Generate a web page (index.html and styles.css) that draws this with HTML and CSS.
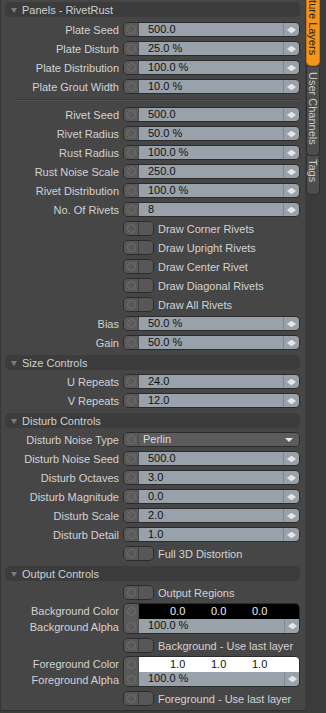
FILE: index.html
```html
<!DOCTYPE html>
<html lang="en">
<head>
  <meta charset="UTF-8">
  <title>Panels - RivetRust</title>
  <link rel="stylesheet" href="styles.css">
</head>
<body>
  <div class="app">
    <div class="panel">
      <div class="head"><span class="tri"></span>Panels - RivetRust</div>
      <div class="row"><span class="lbl">Plate Seed</span><div class="field"><span class="knob"></span><span class="value">500.0</span><span class="spin"></span></div></div>
      <div class="row"><span class="lbl">Plate Disturb</span><div class="field"><span class="knob"></span><span class="value">25.0 %</span><span class="spin"></span></div></div>
      <div class="row"><span class="lbl">Plate Distribution</span><div class="field"><span class="knob"></span><span class="value">100.0 %</span><span class="spin"></span></div></div>
      <div class="row"><span class="lbl">Plate Grout Width</span><div class="field"><span class="knob"></span><span class="value">10.0 %</span><span class="spin"></span></div></div>
      <div class="sep"></div>
      <div class="row"><span class="lbl">Rivet Seed</span><div class="field"><span class="knob"></span><span class="value">500.0</span><span class="spin"></span></div></div>
      <div class="row"><span class="lbl">Rivet Radius</span><div class="field"><span class="knob"></span><span class="value">50.0 %</span><span class="spin"></span></div></div>
      <div class="row"><span class="lbl">Rust Radius</span><div class="field"><span class="knob"></span><span class="value">100.0 %</span><span class="spin"></span></div></div>
      <div class="row"><span class="lbl">Rust Noise Scale</span><div class="field"><span class="knob"></span><span class="value">250.0</span><span class="spin"></span></div></div>
      <div class="row"><span class="lbl">Rivet Distribution</span><div class="field"><span class="knob"></span><span class="value">100.0 %</span><span class="spin"></span></div></div>
      <div class="row"><span class="lbl">No. Of Rivets</span><div class="field"><span class="knob"></span><span class="value">8</span><span class="spin"></span></div></div>
      <div class="row"><span class="lbl"></span><div class="toggle"><span class="knob"></span><span class="off"></span></div><span class="opt">Draw Corner Rivets</span></div>
      <div class="row"><span class="lbl"></span><div class="toggle"><span class="knob"></span><span class="off"></span></div><span class="opt">Draw Upright Rivets</span></div>
      <div class="row"><span class="lbl"></span><div class="toggle"><span class="knob"></span><span class="off"></span></div><span class="opt">Draw Center Rivet</span></div>
      <div class="row"><span class="lbl"></span><div class="toggle"><span class="knob"></span><span class="off"></span></div><span class="opt">Draw Diagonal Rivets</span></div>
      <div class="row"><span class="lbl"></span><div class="toggle"><span class="knob"></span><span class="off"></span></div><span class="opt">Draw All Rivets</span></div>
      <div class="row"><span class="lbl">Bias</span><div class="field"><span class="knob"></span><span class="value">50.0 %</span><span class="spin"></span></div></div>
      <div class="row"><span class="lbl">Gain</span><div class="field"><span class="knob"></span><span class="value">50.0 %</span><span class="spin"></span></div></div>

      <div class="head"><span class="tri"></span>Size Controls</div>
      <div class="row"><span class="lbl">U Repeats</span><div class="field"><span class="knob"></span><span class="value">24.0</span><span class="spin"></span></div></div>
      <div class="row"><span class="lbl">V Repeats</span><div class="field"><span class="knob"></span><span class="value">12.0</span><span class="spin"></span></div></div>

      <div class="head"><span class="tri"></span>Disturb Controls</div>
      <div class="row"><span class="lbl">Disturb Noise Type</span><div class="field select"><span class="knob"></span><span class="value">Perlin</span><span class="drop"></span></div></div>
      <div class="row"><span class="lbl">Disturb Noise Seed</span><div class="field"><span class="knob"></span><span class="value">500.0</span><span class="spin"></span></div></div>
      <div class="row"><span class="lbl">Disturb Octaves</span><div class="field"><span class="knob"></span><span class="value">3.0</span><span class="spin"></span></div></div>
      <div class="row"><span class="lbl">Disturb Magnitude</span><div class="field"><span class="knob"></span><span class="value">0.0</span><span class="spin"></span></div></div>
      <div class="row"><span class="lbl">Disturb Scale</span><div class="field"><span class="knob"></span><span class="value">2.0</span><span class="spin"></span></div></div>
      <div class="row"><span class="lbl">Disturb Detail</span><div class="field"><span class="knob"></span><span class="value">1.0</span><span class="spin"></span></div></div>
      <div class="row"><span class="lbl"></span><div class="toggle"><span class="knob"></span><span class="off"></span></div><span class="opt">Full 3D Distortion</span></div>

      <div class="head"><span class="tri"></span>Output Controls</div>
      <div class="row"><span class="lbl"></span><div class="toggle"><span class="knob"></span><span class="off"></span></div><span class="opt">Output Regions</span></div>
      <div class="pair">
        <div class="pair-labels"><span>Background Color</span><span>Background Alpha</span></div>
        <div class="cbox">
          <span class="knob k1"></span>
          <span class="swatch black"><span>0.0</span><span>0.0</span><span>0.0</span></span>
          <span class="knob k2"></span>
          <span class="value">100.0 %</span>
          <span class="spin"></span>
        </div>
      </div>
      <div class="row"><span class="lbl"></span><div class="toggle"><span class="knob"></span><span class="off"></span></div><span class="opt">Background - Use last layer</span></div>
      <div class="pair">
        <div class="pair-labels"><span>Foreground Color</span><span>Foreground Alpha</span></div>
        <div class="cbox">
          <span class="knob k1"></span>
          <span class="swatch white"><span>1.0</span><span>1.0</span><span>1.0</span></span>
          <span class="knob k2"></span>
          <span class="value">100.0 %</span>
          <span class="spin"></span>
        </div>
      </div>
      <div class="row"><span class="lbl"></span><div class="toggle"><span class="knob"></span><span class="off"></span></div><span class="opt">Foreground - Use last layer</span></div>
    </div>

    <div class="tabs">
      <div class="tab active"><span>Texture Layers</span></div>
      <div class="tab user"><span>User Channels</span></div>
      <div class="tab tags"><span>Tags</span></div>
    </div>
  </div>
</body>
</html>
```

FILE: styles.css
```css
:root {
  --bg: #464646;
  --bg-dark: #3b3b3b;
  --head-bg: #3c3c3c;
  --edge: #2b2b2b;
  --knob-bg: #5a5a5a;
  --field: #99a2aa;
  --label: #d3d3d3;
  --orange: #f5961c;
  --font: "Liberation Sans", Arial, sans-serif;
}

body {
  margin: 0;
  background: var(--bg-dark);
  font-family: var(--font);
  font-size: 11px;
}

.app {
  display: flex;
  width: 326px;
  height: 713px;
  overflow: hidden;
}

.panel {
  width: 305px;
  height: 711px;
  flex-shrink: 0;
  box-sizing: border-box;
  padding: 2px 0 0 4px;
  background: var(--bg);
  border-left: 1px solid #363636;
  border-bottom: 1px solid #2e2e2e;
}

.head {
  display: flex;
  align-items: center;
  width: 295px;
  height: 15px;
  margin: 3px 0 2px;
  border-radius: 5px;
  background: var(--head-bg);
  color: #cfcfcf;
}

.head:first-child {
  margin: 0 0 3px;
}

.tri {
  width: 0;
  height: 0;
  margin: 1px 5px 0 6px;
  border-top: 5px solid #7c7c7c;
  border-left: 3px solid transparent;
  border-right: 3px solid transparent;
}

.row {
  display: flex;
  align-items: center;
  height: 19px;
}

.lbl {
  width: 118px;
  flex-shrink: 0;
  box-sizing: border-box;
  padding-right: 4px;
  text-align: right;
  color: var(--label);
  white-space: nowrap;
}

.sep {
  width: 284px;
  margin: 3px 0 4px 11px;
  border-top: 1px solid #393939;
  border-bottom: 1px solid #505050;
}

.field {
  display: flex;
  width: 177px;
  height: 15px;
  box-sizing: border-box;
  border: 1px solid var(--edge);
  border-radius: 5px;
  overflow: hidden;
}

.knob {
  display: flex;
  align-items: center;
  justify-content: center;
  width: 15px;
  flex-shrink: 0;
  background: var(--knob-bg);
  border-right: 1px solid #4a4a4a;
  box-sizing: border-box;
}

.knob::before {
  content: "";
  width: 9px;
  height: 9px;
  box-sizing: border-box;
  border: 1px solid #6e6e6e;
  border-radius: 50%;
}

.value {
  flex: 1;
  padding-left: 9px;
  line-height: 13px;
  background: var(--field);
  color: #111;
  white-space: nowrap;
}

.spin {
  display: flex;
  align-items: center;
  justify-content: center;
  gap: 1px;
  width: 15px;
  flex-shrink: 0;
  background: var(--field);
  border-left: 1px solid #7f878e;
}

.spin::before,
.spin::after {
  content: "";
  width: 0;
  height: 0;
  border-top: 3px solid transparent;
  border-bottom: 3px solid transparent;
}

.spin::before {
  border-right: 4px solid #e6e6e6;
  box-shadow: 1px 0 0 #e6e6e6;
}

.spin::after {
  border-left: 4px solid #e6e6e6;
}

.select .value {
  padding-left: 4px;
  background: #5c5c5c;
  color: #dcdcdc;
}

.drop {
  display: flex;
  align-items: center;
  justify-content: center;
  width: 20px;
  background: #5c5c5c;
}

.drop::before {
  content: "";
  width: 0;
  height: 0;
  border-top: 4px solid #e8e8e8;
  border-left: 4px solid transparent;
  border-right: 4px solid transparent;
}

.toggle {
  display: flex;
  width: 31px;
  height: 15px;
  box-sizing: border-box;
  border: 1px solid var(--edge);
  border-radius: 5px;
  overflow: hidden;
}

.toggle .knob {
  background: #575757;
  border-right: 1px solid #3e3e3e;
}

.toggle .off {
  flex: 1;
  background: #575757;
}

.opt {
  margin-left: 4px;
  color: var(--label);
  white-space: nowrap;
}

.pair {
  display: flex;
  padding: 1px 0;
}

.pair-labels {
  display: flex;
  flex-direction: column;
  width: 118px;
  box-sizing: border-box;
  padding-right: 4px;
  text-align: right;
  color: var(--label);
  white-space: nowrap;
}

.pair-labels span {
  height: 16px;
  line-height: 16px;
}

.cbox {
  display: grid;
  grid-template-columns: 15px 1fr 15px;
  grid-template-rows: 15px 14px;
  width: 177px;
  height: 31px;
  box-sizing: border-box;
  border: 1px solid var(--edge);
  border-radius: 5px;
  overflow: hidden;
}

.cbox .k1 { grid-column: 1; grid-row: 1; }
.cbox .k2 { grid-column: 1; grid-row: 2; }

.swatch {
  grid-column: 2 / 4;
  display: flex;
  padding-left: 31px;
  line-height: 15px;
}

.swatch span {
  width: 41px;
}

.swatch.black { background: #000; color: #f0f0f0; }
.swatch.white { background: #fff; color: #111; }

.tabs {
  display: flex;
  flex-direction: column;
  width: 21px;
  padding-left: 1px;
  box-sizing: border-box;
}

.tab {
  width: 14px;
  box-sizing: border-box;
  border: 1px solid #2e2e2e;
  border-top: none;
  border-radius: 0 0 5px 5px;
  background: #4d4d4d;
  color: #c9c9c9;
}

.tab span {
  display: block;
  writing-mode: vertical-rl;
  line-height: 12px;
  white-space: nowrap;
}

.tab.active {
  height: 86px;
  margin-top: -20px;
  padding-top: 3px;
  background: var(--orange);
  border-color: #c97612;
  color: #1c1c1c;
}

.tab.user {
  height: 89px;
  margin-top: 1px;
  padding-top: 5px;
}

.tab.tags {
  height: 39px;
  padding-top: 3px;
}
```
